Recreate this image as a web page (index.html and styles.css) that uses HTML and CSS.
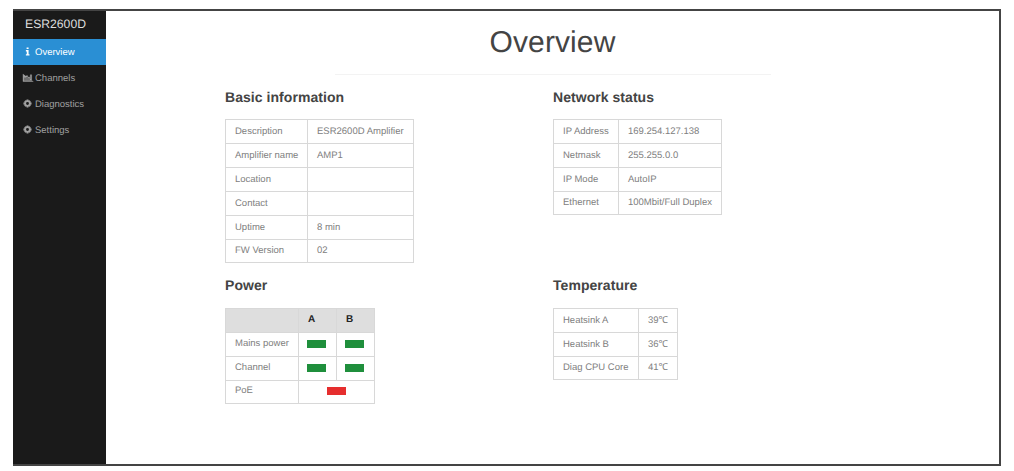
FILE: index.html
```html
<!DOCTYPE html>
<html lang="en">

<head>
    <meta charset="UTF-8">
    <title>ESR2600D</title>
    <link rel="stylesheet" href="styles.css">
</head>

<body>
    <div class="frame">
        <div class="sidebar">
            <div class="brand">ESR2600D</div>
            <ul class="menu">
                <li class="active">
                    <svg class="icon" viewBox="0 0 10 10"><path d="M4 0.5h2.2v1.8H4zM3.2 3.4h3v4.6h1v1.5H3.2V8h1V4.9h-1z" fill="currentColor"/></svg>
                    Overview
                </li>
                <li class="chart">
                    <svg class="icon wide" viewBox="0 0 12 10"><path d="M0.5 1v8.5H12M2 5h1.4v3.5H2zM4.2 3h1.4v5.5H4.2zM6.4 4.5h1.4v4H6.4zM8.6 2h1.4v6.5H8.6z" fill="currentColor" stroke="currentColor" stroke-width="0.5"/></svg>
                    Channels
                </li>
                <li>
                    <svg class="icon" viewBox="0 0 10 10"><path fill-rule="evenodd" fill="currentColor" d="M4 0.5h2l.3 1.3 1-.5 1.4 1.4-.6 1 1.4.3v2l-1.4.3.6 1-1.4 1.4-1-.6-.3 1.4H4l-.3-1.4-1 .6-1.4-1.4.6-1L.5 6V4l1.4-.3-.6-1 1.4-1.4 1 .5zM5 3.4a1.6 1.6 0 1 0 0 3.2 1.6 1.6 0 0 0 0-3.2z"/></svg>
                    Diagnostics
                </li>
                <li>
                    <svg class="icon" viewBox="0 0 10 10"><path fill-rule="evenodd" fill="currentColor" d="M4 0.5h2l.3 1.3 1-.5 1.4 1.4-.6 1 1.4.3v2l-1.4.3.6 1-1.4 1.4-1-.6-.3 1.4H4l-.3-1.4-1 .6-1.4-1.4.6-1L.5 6V4l1.4-.3-.6-1 1.4-1.4 1 .5zM5 3.4a1.6 1.6 0 1 0 0 3.2 1.6 1.6 0 0 0 0-3.2z"/></svg>
                    Settings
                </li>
            </ul>
        </div>

        <div class="main">
            <h1>Overview</h1>
            <div class="rule"></div>

            <div class="panels">
                <div class="panel">
                    <h2>Basic information</h2>
                    <table class="basic">
                        <tr><td class="name">Description</td><td>ESR2600D Amplifier</td></tr>
                        <tr><td class="name">Amplifier name</td><td>AMP1</td></tr>
                        <tr><td class="name">Location</td><td></td></tr>
                        <tr><td class="name">Contact</td><td></td></tr>
                        <tr><td class="name">Uptime</td><td>8 min</td></tr>
                        <tr><td class="name">FW Version</td><td>02</td></tr>
                    </table>
                </div>

                <div class="panel">
                    <h2>Network status</h2>
                    <table class="network">
                        <tr><td class="name">IP Address</td><td>169.254.127.138</td></tr>
                        <tr><td class="name">Netmask</td><td>255.255.0.0</td></tr>
                        <tr><td class="name">IP Mode</td><td>AutoIP</td></tr>
                        <tr><td class="name">Ethernet</td><td>100Mbit/Full Duplex</td></tr>
                    </table>
                </div>

                <div class="panel lower">
                    <h2>Power</h2>
                    <table class="power">
                        <tr class="head"><td class="name"></td><td>A</td><td>B</td></tr>
                        <tr><td class="name">Mains power</td><td><span class="led green"></span></td><td><span class="led green"></span></td></tr>
                        <tr><td class="name">Channel</td><td><span class="led green"></span></td><td><span class="led green"></span></td></tr>
                        <tr><td class="name">PoE</td><td colspan="2" class="center"><span class="led red"></span></td></tr>
                    </table>
                </div>

                <div class="panel lower">
                    <h2>Temperature</h2>
                    <table class="temp">
                        <tr><td class="name">Heatsink A</td><td>39℃</td></tr>
                        <tr><td class="name">Heatsink B</td><td>36℃</td></tr>
                        <tr><td class="name">Diag CPU Core</td><td>41℃</td></tr>
                    </table>
                </div>
            </div>
        </div>
    </div>
</body>

</html>
```

FILE: styles.css
```css
* {
    margin: 0;
    padding: 0;
    box-sizing: border-box;
    font-family: "Liberation Sans", Arial, sans-serif;
}

body {
    background: #fff;
    padding: 9px 13px 5px 13px;
    height: 471px;
    overflow: hidden;
    text-rendering: geometricPrecision;
}

.frame {
    display: flex;
    height: 457px;
    border: solid #444;
    border-width: 2px 2px 2px 0;
}

.sidebar {
    width: 93px;
    background: #1a1a1a;
    color: #a0a0a0;
}

.brand {
    height: 28px;
    line-height: 26px;
    padding-left: 12px;
    font-size: 12.2px;
    color: #ddd;
}

.menu li {
    display: flex;
    align-items: center;
    gap: 3px;
    height: 26px;
    padding-left: 10px;
    list-style: none;
    font-size: 9.5px;
}

.menu li.active {
    background: #2a8fd4;
    color: #fff;
}

.menu li.chart {
    padding-left: 9px;
    gap: 1px;
}

.icon {
    width: 9px;
    height: 9px;
    margin-bottom: 2px;
}

.icon.wide {
    width: 12px;
}

.main {
    flex: 1;
    background: #fff;
}

h1 {
    margin-top: 13px;
    text-align: center;
    font-size: 30px;
    font-weight: normal;
    line-height: 37px;
    letter-spacing: 0.1px;
    color: #444;
}

.rule {
    width: 436px;
    height: 1px;
    margin: 13px auto 0 auto;
    background: #f3f3f3;
}

.panels {
    display: grid;
    grid-template-columns: 328px 328px;
    grid-template-rows: 188px auto;
    padding: 14px 0 0 119px;
}

h2 {
    font-size: 14px;
    line-height: 16px;
    letter-spacing: 0.05px;
    color: #444;
    margin-bottom: 14px;
}

.lower h2 {
    margin-bottom: 15px;
}

table {
    border-collapse: collapse;
    table-layout: fixed;
    font-size: 9.5px;
    line-height: 12px;
    color: #808080;
}

td {
    height: 24px;
    padding-left: 9px;
    border: 1px solid #d8d8d8;
}

tr:last-child td {
    height: 23px;
}

.basic {
    width: 189px;
}

.basic .name {
    width: 82px;
}

.network {
    width: 169px;
}

.network .name {
    width: 65px;
}

.power {
    width: 150px;
}

.power .name {
    width: 73px;
}

.power td {
    padding-bottom: 2px;
}

.power .head td {
    background: #dedede;
    color: #222;
    font-size: 10px;
    font-weight: bold;
}

.power .center {
    text-align: center;
    padding-left: 0;
}

.power td:not(.name):not(.center) {
    padding-left: 8px;
}

.power .head td:not(.name) {
    padding-left: 9px;
}

.temp {
    width: 125px;
}

.temp .name {
    width: 85px;
}

.led {
    display: block;
    width: 19px;
    height: 8px;
}

.center .led {
    margin: 0 auto;
}

.green {
    background: #1f8f3c;
}

.red {
    background: #e62e2e;
}
```
